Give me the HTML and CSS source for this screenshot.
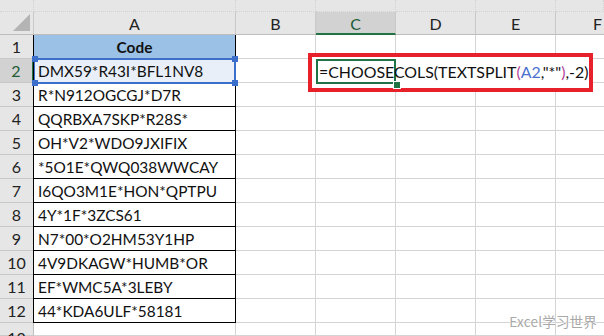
FILE: index.html
```html
<!DOCTYPE html>
<html>
<head>
  <title>CHOOSECOLS TEXTSPLIT</title>
  <link rel="stylesheet" href="styles.css">
</head>
<body>

<div class="sheet">
  <!-- top strip -->
  <div class="strip"></div>
  <div class="strip"></div>
  <div class="strip"></div>
  <div class="strip"></div>
  <div class="strip"></div>
  <div class="strip"></div>
  <div class="strip"></div>

  <!-- column headers -->
  <div class="corner"><span class="tri"></span></div>
  <div class="colhead">A</div>
  <div class="colhead">B</div>
  <div class="colhead active-col">C</div>
  <div class="colhead">D</div>
  <div class="colhead">E</div>
  <div class="colhead last">F</div>
</div>

<!-- overlays -->
<div class="a2-select">
  <span class="handle h-tl"></span>
  <span class="handle h-tr"></span>
  <span class="handle h-bl"></span>
  <span class="handle h-br"></span>
</div>

<div class="formula-box">
  <div class="editing">
    <span class="fx">=CHOOSECOLS(TEXTSPLIT<span class="paren">(</span><span class="ref">A2</span>,"*"<span class="paren">)</span>,-2)</span>
  </div>
  <span class="fill-handle"></span>
</div>

<div class="watermark">Excel学习世界</div>

<script>
const codes = [
  "DMX59*R43I*BFL1NV8",
  "R*N912OGCGJ*D7R",
  "QQRBXA7SKP*R28S*",
  "OH*V2*WDO9JXIFIX",
  "*5O1E*QWQ038WWCAY",
  "I6QO3M1E*HON*QPTPU",
  "4Y*1F*3ZCS61",
  "N7*00*O2HM53Y1HP",
  "4V9DKAGW*HUMB*OR",
  "EF*WMC5A*3LEBY",
  "44*KDA6ULF*58181"
];

const sheet = document.querySelector(".sheet");

function addRow(num, aText, aClass, rowClass) {
  let html = `<div class="rowhead ${rowClass || ""}">${num}</div>`;
  if (aClass !== null) {
    html += `<div class="cell data ${aClass}">${aText}</div>`;
  } else {
    html += `<div class="cell"></div>`;
  }
  html += `<div class="cell"></div><div class="cell"></div><div class="cell"></div><div class="cell"></div><div class="cell last"></div>`;
  sheet.insertAdjacentHTML("beforeend", html);
}

addRow(1, "Code", "title");
codes.forEach((code, i) => {
  addRow(i + 2, code, i === 0 ? "picked" : "", i === 0 ? "active-row" : "");
});
addRow(13, "", null, "tail");
</script>

</body>
</html>
```

FILE: styles.css
```css
body {
  margin: 0;
  width: 604px;
  height: 336px;
  overflow: hidden;
  background: #fff;
  font-family: Lato, "Noto Sans", sans-serif;
  position: relative;
}

.sheet {
  display: grid;
  grid-template-columns: 34px 202px 80px 80px 80px 80px 48px;
  grid-template-rows: 12px 23px repeat(12, 24px) 13px;
}

.sheet > div {
  box-sizing: border-box;
}

/* header area */
.strip {
  background: #e6e6e6;
  border-right: 1px dotted #d2d2d2;
  border-bottom: 1px dotted #d2d2d2;
}

.corner {
  background: #e6e6e6;
  border-right: 1px solid #c9c9c9;
  border-bottom: 1px solid #bdbdbd;
  position: relative;
}

.tri {
  position: absolute;
  right: 3px;
  bottom: 3px;
  width: 0;
  height: 0;
  border-left: 17px solid transparent;
  border-bottom: 17px solid #b4b4b4;
}

.colhead {
  background: #e6e6e6;
  border-right: 1px solid #c9c9c9;
  border-bottom: 1px solid #bdbdbd;
  display: flex;
  align-items: center;
  justify-content: center;
  font-size: 16px;
  color: #222;
  padding-top: 1px;
}

.colhead.last {
  justify-content: flex-end;
  padding-right: 2px;
  border-right: none;
}

.colhead.active-col {
  background: #d2d2d2;
  border-bottom: 2px solid #217346;
  color: #1d5b36;
}

.rowhead {
  background: #e6e6e6;
  border-right: 1px solid #bdbdbd;
  border-bottom: 1px solid #c9c9c9;
  display: flex;
  align-items: center;
  justify-content: center;
  font-size: 16px;
  color: #222;
}

.rowhead.active-row {
  background: #d2d2d2;
  border-right: 2px solid #217346;
  color: #1d5b36;
}

.rowhead.tail {
  align-items: flex-start;
  padding-top: 5px;
}

.cell {
  border-right: 1px solid #d4d4d4;
  border-bottom: 1px solid #d4d4d4;
}

.cell.last {
  border-right: none;
}

.cell.data {
  border: 1px solid #000;
  border-top: none;
  margin-left: -1px;
  display: flex;
  align-items: center;
  padding-left: 4px;
  font-size: 15.4px;
  color: #111;
  white-space: nowrap;
}

.cell.title {
  background: #9bc2e6;
  justify-content: center;
  font-weight: bold;
  padding-left: 0;
}

.cell.picked {
  background: #e8eff8;
}

/* A2 reference highlight */
.a2-select {
  position: absolute;
  left: 34px;
  top: 58px;
  width: 202px;
  height: 26px;
  box-sizing: border-box;
  border: 2px solid #3b6fc9;
  border-left-width: 1px;
}

.handle {
  position: absolute;
  width: 6px;
  height: 6px;
  background: #3b6fc9;
}

.h-tl { left: -3px; top: -4px; }
.h-tr { right: -4px; top: -4px; }
.h-bl { left: -3px; bottom: -4px; }
.h-br { right: -4px; bottom: -4px; }

/* editing cell with red call-out */
.formula-box {
  position: absolute;
  left: 308px;
  top: 53px;
  width: 285px;
  height: 39px;
  box-sizing: border-box;
  border: 4px solid #e8202a;
  background: #fff;
}

.editing {
  position: absolute;
  left: 4px;
  top: 2px;
  width: 80px;
  height: 25px;
  box-sizing: border-box;
  border: 2px solid #217346;
}

.fx {
  position: absolute;
  left: 1px;
  top: 1px;
  font-size: 15.9px;
  color: #111;
  white-space: nowrap;
  line-height: 20px;
}

.paren {
  color: #b2449a;
}

.ref {
  color: #4a70cf;
}

.fill-handle {
  position: absolute;
  left: 81px;
  top: 24px;
  width: 6px;
  height: 6px;
  background: #217346;
  border: 1px solid #fff;
}

.watermark {
  position: absolute;
  right: 7px;
  bottom: 5px;
  font-family: "Noto Sans CJK SC", "Noto Sans", sans-serif;
  font-size: 13.5px;
  color: #a8a8a8;
  text-shadow: 0 0 2px #fff, 0 0 1px #fff;
  letter-spacing: 0.2px;
}
```
